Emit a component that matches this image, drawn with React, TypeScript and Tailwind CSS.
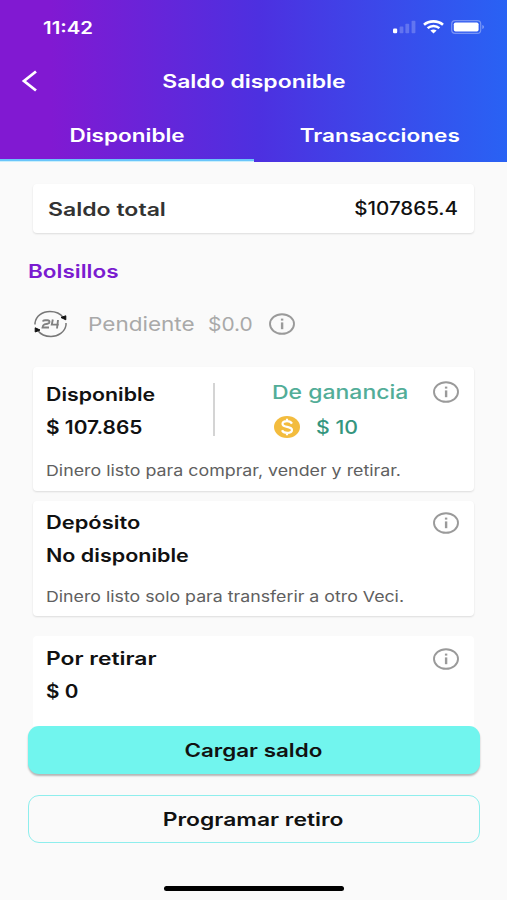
import React from 'react';

const InfoIcon: React.FC = () => (
  <svg className="block h-[22px] w-[26px] shrink-0" viewBox="0 0 26 22" fill="none">
    <ellipse cx="13" cy="11" rx="12" ry="9.8" stroke="#9a9a9a" strokeWidth="1.9" />
    <rect x="11.9" y="5.6" width="2.4" height="2" fill="#9a9a9a" />
    <rect x="11.9" y="9.4" width="2.4" height="6.8" fill="#9a9a9a" />
  </svg>
);

const SignalIcon: React.FC = () => (
  <svg className="block h-[14px] w-[23px]" viewBox="0 0 23 14" fill="#fff">
    <rect x="0" y="8.6" width="4.2" height="4.6" rx="1.2" />
    <rect x="6.6" y="6.6" width="3.8" height="6.6" rx="0.8" opacity="0.22" />
    <rect x="12.4" y="3.8" width="3.8" height="9.4" rx="0.8" opacity="0.22" />
    <rect x="18.6" y="0.8" width="3.8" height="12.4" rx="0.8" opacity="0.22" />
  </svg>
);

const WifiIcon: React.FC = () => (
  <svg className="block h-[14px] w-[21px]" viewBox="0 0 21 14" fill="none" stroke="#fff">
    <path d="M1 4.8C6.2 0.2 14.8 0.2 20 4.8" strokeWidth="2.6" />
    <path d="M4.6 8.2C8 5.2 13 5.2 16.4 8.2" strokeWidth="2.4" />
    <path d="M7.4 10.5Q10.5 8.5 13.6 10.5L10.5 13.4Z" fill="#fff" stroke="none" />
  </svg>
);

const BatteryIcon: React.FC = () => (
  <svg className="block h-[14px] w-[34px]" viewBox="0 0 34 14" fill="none">
    <rect x="0.7" y="0.7" width="29" height="12.6" rx="3.4" stroke="#fff" strokeOpacity="0.35" strokeWidth="1.2" />
    <rect x="2.8" y="2.4" width="24.8" height="9.2" rx="1.8" fill="#fff" />
    <path d="M31.3 5V9Q33 8.5 33 7Q33 5.5 31.3 5Z" fill="#fff" fillOpacity="0.4" />
  </svg>
);

const PendingIcon: React.FC = () => (
  <svg className="block h-[28px] w-[34px]" viewBox="0 0 34 28" fill="none">
    <path d="M2 14.5V13C3 6 9.3 1.5 17 1.5C22.5 1.5 27.5 3.7 30.2 7.5" stroke="#777" strokeWidth="1.5" />
    <path d="M33 13V15C32 22 25 26.5 18 26.5C12.5 26.5 7.5 24.3 4.8 20.5" stroke="#777" strokeWidth="1.5" />
    <path d="M28 7.5L32.8 5.8V9.8Z" fill="#111" stroke="#111" />
    <path d="M7 20L2.2 22V17.8Z" fill="#111" stroke="#111" />
    <path d="M9.8 11.5Q10.2 10.3 12 10.3H14.5Q16.500 10.300 16.500 12Q16.500 13.500 14.500 13.800L11.500 14.300Q9.800 15 9.500 17.500H16" stroke="#808080" strokeWidth="1.9" />
    <path d="M19.8 9.5L18.8 14.6H25.800M25 10L24 18.500" stroke="#808080" strokeWidth="1.900" />
  </svg>
);

const CoinIcon: React.FC = () => (
  <svg className="block h-[22px] w-[26px]" viewBox="0 0 26 22" fill="none">
    <ellipse cx="13" cy="11" rx="13" ry="11" fill="#f3bc3e" />
    <path d="M18 7.6C17 5.9 15.3 5.2 13 5.2C10.2 5.2 8.5 6.3 8.5 8C8.5 12 18 9.8 18 14C18 15.8 16 16.9 13.2 16.9C10.7 16.9 8.8 16 8 14.3M13 2.7V5.2M13 16.9V19.3" stroke="#fff" strokeWidth="2.2" />
  </svg>
);

const cards = [
  { title: 'Disponible', titleScale: 'scale-x-[1.185]', value: '$ 107.865', valueScale: 'scale-x-[1.16]' },
  { title: 'Depósito', titleScale: 'scale-x-[1.215]', value: 'No disponible', valueScale: 'scale-x-[1.195]' },
  { title: 'Por retirar', titleScale: 'scale-x-[1.27]', value: '$ 0', valueScale: 'scale-x-[1.15]' },
];

interface CardTextProps {
  index: number;
}

const CardText: React.FC<CardTextProps> = ({ index }) => {
  const { title, titleScale, value, valueScale } = cards[index];
  return (
    <div className="text-[18px] font-semibold leading-[33px] text-[#111]">
      <p className={`w-max origin-left ${titleScale}`}>{title}</p>
      <p className={`w-max origin-left ${valueScale}`}>{value}</p>
    </div>
  );
};

export default function App() {
  return (
    <div className="flex h-[900px] w-[507px] flex-col overflow-hidden bg-[#fafafa] font-['Inter',sans-serif] whitespace-nowrap">
      {/* Header */}
      <header className="flex h-[162px] shrink-0 flex-col bg-linear-to-r/srgb from-[#8119d2] from-10% via-[#4d30e0] via-51% to-[#2962f4] text-white">
        <div className="flex h-[54px] shrink-0 items-center justify-between pl-[43px] pr-[22px]">
          <span className="origin-left scale-x-[1.2] pt-[3px] text-[17px] font-semibold">11:42</span>
          <div className="flex items-center gap-[7px]">
            <SignalIcon />
            <WifiIcon />
            <BatteryIcon />
          </div>
        </div>
        <div className="grid h-[54px] shrink-0 grid-cols-[60px_1fr_60px] items-center">
          <svg className="ml-[21px] h-[22px] w-[17px]" viewBox="0 0 17 22" fill="none">
            <path d="M15 1.5L3 11L15 20.5" stroke="#fff" strokeWidth="2.8" />
          </svg>
          <h1 className="text-center text-[18px] font-semibold">
            <span className="inline-block scale-x-[1.275]">Saldo disponible</span>
          </h1>
        </div>
        <nav className="grid h-[54px] shrink-0 grid-cols-2 pt-px text-center text-[18px] font-semibold leading-[54px]">
          <div className="h-[52px] border-b-2 border-[#69c5fa] shadow-[0_1px_0_#c9effc]">
            <span className="inline-block scale-x-[1.25]">Disponible</span>
          </div>
          <div className="h-[52px]">
            <span className="inline-block scale-x-[1.255]">Transacciones</span>
          </div>
        </nav>
      </header>

      {/* Balance */}
      <main className="flex flex-col px-[33px] pt-[22px]">
        <div className="flex h-[49px] items-center justify-between rounded bg-white pl-[15px] pr-4 text-[18px] shadow-[0_1px_2px_rgba(0,0,0,0.12)]">
          <span className="origin-left scale-x-[1.28] pt-px font-semibold text-[#333]">Saldo total</span>
          <span className="origin-right scale-x-[1.14] font-medium text-[#111]">$107865.4</span>
        </div>

        <h2 className="-ml-[5px] mt-[23px] w-max origin-left scale-x-[1.25] text-[18px] font-semibold leading-8 text-[#7a1bd0]">Bolsillos</h2>

        <div className="mt-[22px] flex h-[28px] items-center text-[19px] text-[#a9a9a9]">
          <PendingIcon />
          <span className="ml-[21px] w-[120px] pt-[2px]"><span className="inline-block origin-left scale-x-[1.185]">Pendiente</span></span>
          <span className="w-[61px] pt-[2px]"><span className="inline-block origin-left scale-x-[1.1]">$0.0</span></span>
          <InfoIcon />
        </div>

        {/* Pockets */}
        <section className="mt-[29px] h-[124px] rounded bg-white pl-[13px] pr-[15px] pt-[10px] shadow-[0_1px_2px_rgba(0,0,0,0.12)]">
          <div className="flex">
            <div className="w-[167px] pt-px"><CardText index={0} /></div>
            <div className="mt-[6px] h-[53px] w-[2px] bg-[#d4d4d4]" />
            <div className="ml-[57px] w-[161px] text-[#52ad98]">
              <p className="w-max origin-left scale-x-[1.21] text-[19px] font-medium leading-[31px]">De ganancia</p>
              <div className="ml-[2px] mt-[3px] flex h-[32px] items-center gap-4">
                <CoinIcon />
                <span className="origin-left scale-x-[1.12] pt-[2px] text-[19px] font-medium text-[#35967e]">$ 10</span>
              </div>
            </div>
            <div className="mt-[4px]"><InfoIcon /></div>
          </div>
          <p className="mt-[16px] w-max origin-left scale-x-[1.187] text-[15px] leading-[22px] text-[#606060]">Dinero listo para comprar, vender y retirar.</p>
        </section>

        <section className="mt-[10px] h-[115px] rounded bg-white pl-[13px] pr-[15px] pt-[5px] shadow-[0_1px_2px_rgba(0,0,0,0.12)]">
          <div className="flex justify-between">
            <CardText index={1} />
            <div className="mt-[6px]"><InfoIcon /></div>
          </div>
          <p className="mt-[14px] w-max origin-left scale-x-[1.183] text-[15px] leading-[22px] text-[#606060]">Dinero listo solo para transferir a otro Veci.</p>
        </section>

        <section className="mt-[20px] flex h-[90px] justify-between rounded-t bg-white pl-[13px] pr-[15px] pt-[6px]">
          <CardText index={2} />
          <div className="mt-[6px]"><InfoIcon /></div>
        </section>
      </main>

      {/* Actions */}
      <footer className="flex flex-col items-center px-7 text-[18px] font-semibold text-[#111]">
        <button className="h-[48px] w-[452px] rounded-[11px] bg-[#71f5ee] shadow-[0_2px_2px_rgba(0,0,0,0.28)]">
          <span className="inline-block scale-x-[1.245]">Cargar saldo</span>
        </button>
        <button className="mt-[21px] h-[48px] w-[452px] rounded-[11px] border-[1.5px] border-[#8eeeed]">
          <span className="inline-block scale-x-[1.27]">Programar retiro</span>
        </button>
        <div className="mt-[43px] h-[5px] w-[180px] rounded-full bg-black" />
      </footer>
    </div>
  );
}
